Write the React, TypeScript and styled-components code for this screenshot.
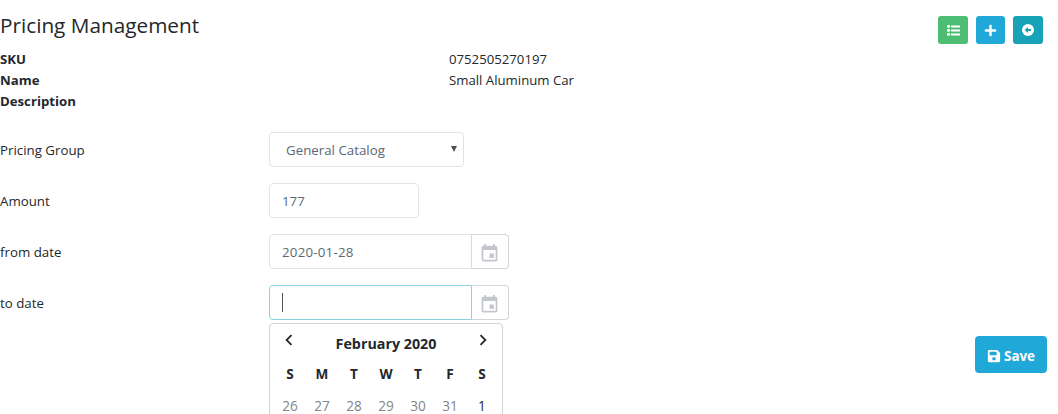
import React from "react";
import styled, { createGlobalStyle } from "styled-components";
import { FaPlus, FaSave } from "react-icons/fa";
import { MdInsertInvitation, MdChevronLeft, MdChevronRight } from "react-icons/md";

const GlobalStyle = createGlobalStyle`
  * { box-sizing: border-box; }
  html, body { margin: 0; background: #fff; }
  body {
    height: 414px;
    overflow: hidden;
    font-family: "Open Sans", "Noto Sans", sans-serif;
    font-size: 13.2px;
    line-height: 21px;
    color: #23282c;
  }
`;

const Page = styled.main`
  position: relative;
  height: 414px;
  overflow: hidden;
`;

const Header = styled.header`
  display: flex;
  justify-content: space-between;
  align-items: flex-start;
  height: 49px;
  padding: 13px 15px 0 0;
`;

const Title = styled.h1`
  margin: 0;
  font-size: 20.75px;
  line-height: 25px;
  font-weight: 400;
  white-space: nowrap;
`;

const Actions = styled.div`
  display: flex;
  gap: 8px;
  padding-top: 3px;
`;

const IconButton = styled.button<{ $color: string; $width: number }>`
  display: flex;
  align-items: center;
  justify-content: center;
  width: ${(p) => p.$width}px;
  height: 28px;
  padding: 0;
  border: 0;
  border-radius: 3px;
  background: ${(p) => p.$color};
  color: #fff;
  font-size: 12px;
`;

const Details = styled.dl`
  display: grid;
  grid-template-columns: 449px 1fr;
  grid-auto-rows: 21px;
  margin: 0;
`;

const Term = styled.dt`
  font-weight: 700;
`;

const Value = styled.dd`
  margin: 0;
`;

const Form = styled.form`
  display: flex;
  flex-direction: column;
  gap: 16px;
  margin-top: 20px;
`;

const Row = styled.div`
  display: flex;
  align-items: center;
  height: 35px;
`;

const Label = styled.label`
  width: 269px;
  padding-top: 2px;
  font-size: 13.3px;
`;

const Field = styled.div<{
  $width: number;
  $joined?: boolean;
  $focused?: boolean;
  $indent?: number;
  $spacing?: number;
}>`
  display: flex;
  align-items: center;
  justify-content: space-between;
  width: ${(p) => p.$width}px;
  height: 35px;
  padding: 2px 6px 0 ${(p) => p.$indent ?? 12}px;
  border: 1px solid ${(p) => (p.$focused ? "#8ad4df" : "#e1e4e7")};
  border-radius: ${(p) => (p.$joined ? "4px 0 0 4px" : "4px")};
  color: #5c6873;
  font-size: 13.3px;
  letter-spacing: ${(p) => p.$spacing ?? 0}px;
`;

const Arrow = styled.svg`
  width: 6px;
  height: 6px;
  margin-top: -4px;
`;

const Caret = styled.span`
  width: 1px;
  height: 19px;
  margin-top: -2px;
  background: #4c545b;
`;

const CalendarButton = styled.button<{ $focused?: boolean }>`
  display: flex;
  align-items: center;
  justify-content: center;
  width: 38px;
  height: 35px;
  margin-left: -1px;
  padding: 4px 1px 0 0;
  border: 1px solid #d0d5da;
  border-left-color: ${(p) => (p.$focused ? "#8ad4df" : "#d8dcdf")};
  border-radius: 0 4px 4px 0;
  background: #fff;
  color: #c3c7cc;
  font-size: 21px;
`;

const Calendar = styled.section`
  position: absolute;
  left: 269px;
  top: 323px;
  width: 234px;
  height: 260px;
  padding: 0 4px;
  border: 1px solid #cdd2d7;
  border-radius: 4px;
  background: #fff;
`;

const MonthBar = styled.div`
  display: flex;
  justify-content: space-between;
  height: 34px;
  padding: 5px 4px 0;
  font-size: 22px;
`;

const Month = styled.strong`
  padding-top: 4px;
  font-size: 14.3px;
  line-height: 21px;
`;

const Days = styled.div`
  display: grid;
  grid-template-columns: repeat(7, 32px);
  grid-auto-rows: 32px;
  text-align: center;
  line-height: 32px;
  font-size: 13.6px;
`;

const Weekday = styled.span`
  font-weight: 700;
`;

const Day = styled.span<{ $outside: boolean }>`
  color: ${(p) => (p.$outside ? "#858585" : "#23282c")};
`;

const SaveButton = styled.button`
  position: absolute;
  left: 975px;
  top: 336px;
  display: flex;
  align-items: center;
  gap: 3px;
  width: 72px;
  height: 37px;
  padding: 3px 0 0 12px;
  border: 0;
  border-radius: 4px;
  background: #20a8d8;
  color: #fff;
  font: 700 13.4px/21px "Open Sans", sans-serif;
`;

const ListIcon = () => (
  <svg width="13" height="11" viewBox="0 0 13 11" fill="#fff">
    {[0, 4, 8].map((y) => (
      <g key={y}>
        <rect x="0" y={y} width="3" height="2.8" rx="1" />
        <rect x="4" y={y + 0.4} width="9" height="2" rx="0.4" />
      </g>
    ))}
  </svg>
);

const BackIcon = () => (
  <svg width="12" height="12" viewBox="0 0 12 12">
    <circle cx="6" cy="6" r="6" fill="#fff" />
    <path d="M2.6 6 6 3v2.1h3v1.8H6V9z" fill="#17a2b8" />
  </svg>
);

const weekdays = ["S", "M", "T", "W", "T", "F", "S"];
const days = [26, 27, 28, 29, 30, 31, 1];

export default function App() {
  return (
    <Page>
      <GlobalStyle />
      <Header>
        <Title>Pricing Management</Title>
        <Actions>
          <IconButton $color="#4dbd74" $width={30} aria-label="List"><ListIcon /></IconButton>
          <IconButton $color="#20a8d8" $width={29} aria-label="Add"><FaPlus size={13} /></IconButton>
          <IconButton $color="#17a2b8" $width={30} aria-label="Back"><BackIcon /></IconButton>
        </Actions>
      </Header>
      <Details>
        <Term>SKU</Term><Value>0752505270197</Value>
        <Term>Name</Term><Value>Small Aluminum Car</Value>
        <Term>Description</Term><Value />
      </Details>
      <Form>
        <Row>
          <Label>Pricing Group</Label>
          <Field $width={195} $indent={16}>
            General Catalog
            <Arrow viewBox="0 0 6 6"><path d="M0 0h6L3 6z" fill="#4c545b" /></Arrow>
          </Field>
        </Row>
        <Row>
          <Label>Amount</Label>
          <Field $width={150}>177</Field>
        </Row>
        <Row>
          <Label>from date</Label>
          <Field $width={203} $joined $spacing={0.22}>2020-01-28</Field>
          <CalendarButton type="button" aria-label="Pick from date"><MdInsertInvitation /></CalendarButton>
        </Row>
        <Row>
          <Label>to date</Label>
          <Field $width={203} $joined $focused><Caret /></Field>
          <CalendarButton $focused type="button" aria-label="Pick to date"><MdInsertInvitation /></CalendarButton>
        </Row>
      </Form>
      <Calendar>
        <MonthBar>
          <MdChevronLeft />
          <Month>February 2020</Month>
          <MdChevronRight />
        </MonthBar>
        <Days>
          {weekdays.map((d, i) => <Weekday key={i}>{d}</Weekday>)}
          {days.map((d) => <Day key={d} $outside={d > 20}>{d}</Day>)}
        </Days>
      </Calendar>
      <SaveButton><FaSave size={14} />Save</SaveButton>
    </Page>
  );
}
